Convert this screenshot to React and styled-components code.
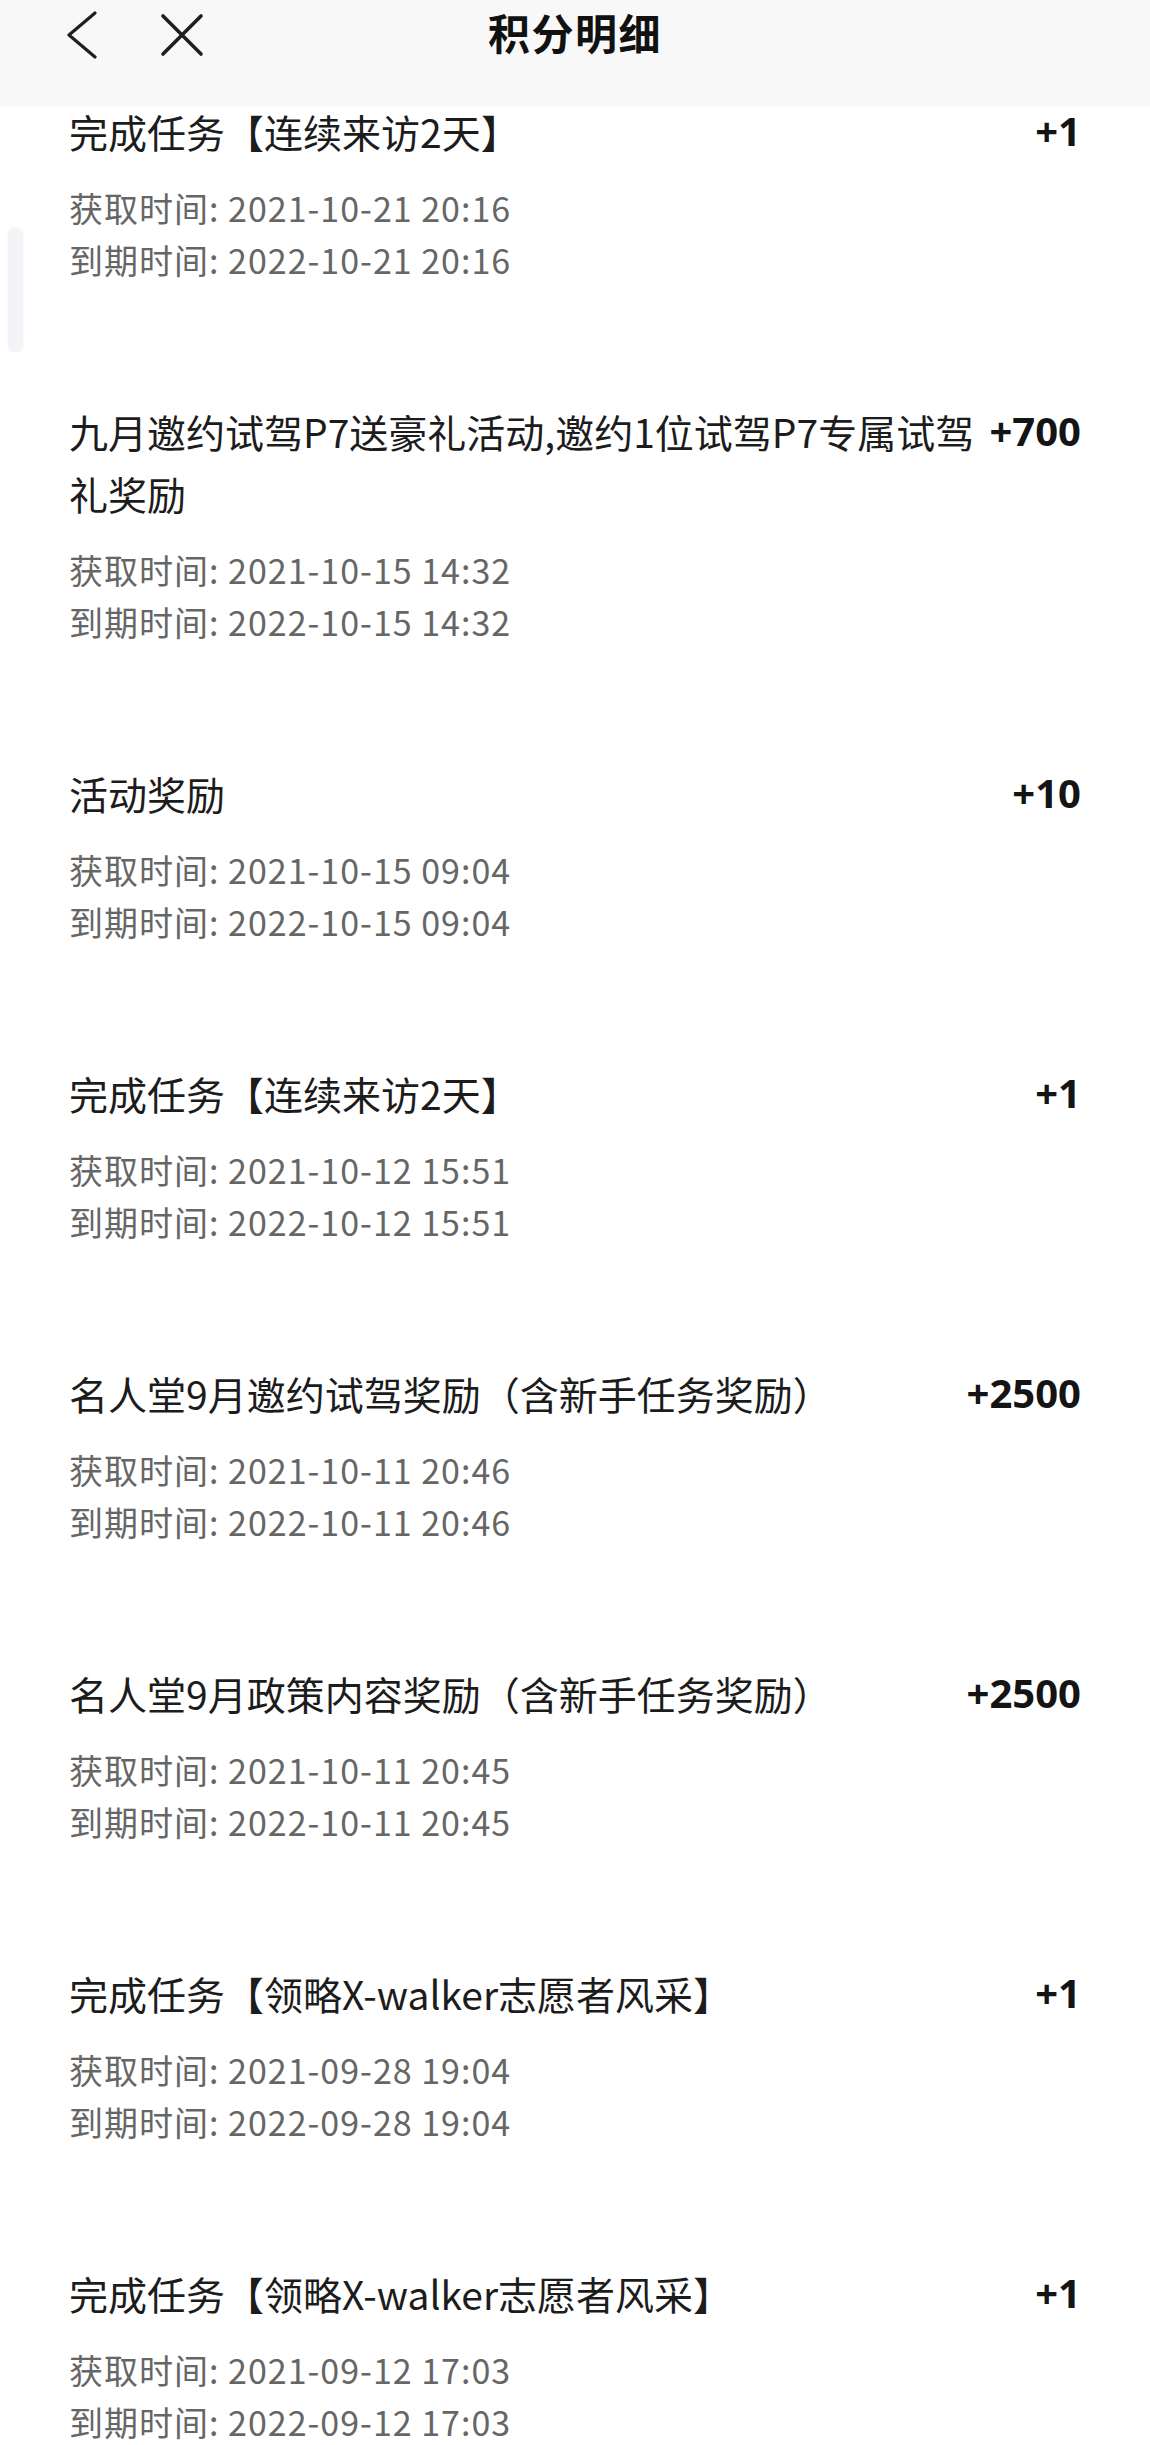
import React from 'react'
import styled, { createGlobalStyle } from 'styled-components'

const GlobalStyle = createGlobalStyle`
  html, body {
    margin: 0;
    padding: 0;
    background: #ffffff;
  }
  body {
    font-family: "Noto Sans CJK SC", "Noto Sans", "Liberation Sans", sans-serif;
    color: #1c1c1c;
  }
`

const Page = styled.div`
  position: relative;
  width: 1150px;
  height: 2445px;
  overflow: hidden;
  background: #fff;
`

const NavBar = styled.div`
  position: sticky;
  top: 0;
  z-index: 2;
  height: 107px;
  background: #f8f8f8;
  display: grid;
  grid-template-columns: 1fr auto 1fr;
  align-items: start;
`

const NavLeft = styled.div`
  display: flex;
  align-items: center;
  gap: 62px;
  padding: 11px 0 0 66px;
`

const IconButton = styled.button`
  border: 0;
  background: none;
  padding: 0;
  display: flex;
  color: #1f1f1f;
`

const Title = styled.h1`
  margin: 0;
  padding-top: 2px;
  font-size: 42px;
  line-height: 60px;
  font-weight: 700;
  color: #111;
  letter-spacing: 1.5px;
`

const ScrollHint = styled.div`
  position: absolute;
  left: 8px;
  top: 228px;
  width: 15px;
  height: 124px;
  border-radius: 8px;
  background: #f4f4f8;
  box-shadow: 0 0 3px rgba(0, 0, 0, 0.06);
  z-index: 1;
`

const List = styled.div`
  margin-top: -7px;
`

const Item = styled.div`
  padding: 0 69px 114px 69px;
`

const Head = styled.div`
  display: flex;
  align-items: flex-start;
  gap: 8px;
`

const ItemTitle = styled.div`
  flex: 1;
  font-size: 39px;
  line-height: 62px;
  color: #1c1c1c;
`

const Amount = styled.div`
  font-family: "Noto Sans", "Liberation Sans", sans-serif;
  font-size: 40px;
  line-height: 62px;
  font-weight: 700;
  color: #141414;
  white-space: nowrap;
`

const Dates = styled.div`
  margin-top: 20px;
`

const DateLine = styled.div`
  font-size: 34px;
  line-height: 52px;
  letter-spacing: 1px;
  color: #666;
`

const records = [
  { title: '完成任务【连续来访2天】', amount: '+1', get: '2021-10-21 20:16', end: '2022-10-21 20:16' },
  { title: '九月邀约试驾P7送豪礼活动,邀约1位试驾P7专属试驾礼奖励', amount: '+700', get: '2021-10-15 14:32', end: '2022-10-15 14:32' },
  { title: '活动奖励', amount: '+10', get: '2021-10-15 09:04', end: '2022-10-15 09:04' },
  { title: '完成任务【连续来访2天】', amount: '+1', get: '2021-10-12 15:51', end: '2022-10-12 15:51' },
  { title: '名人堂9月邀约试驾奖励（含新手任务奖励）', amount: '+2500', get: '2021-10-11 20:46', end: '2022-10-11 20:46' },
  { title: '名人堂9月政策内容奖励（含新手任务奖励）', amount: '+2500', get: '2021-10-11 20:45', end: '2022-10-11 20:45' },
  { title: '完成任务【领略X-walker志愿者风采】', amount: '+1', get: '2021-09-28 19:04', end: '2022-09-28 19:04' },
  { title: '完成任务【领略X-walker志愿者风采】', amount: '+1', get: '2021-09-12 17:03', end: '2022-09-12 17:03' },
]

export default function App () {
  return (
    <Page>
      <GlobalStyle />
      <NavBar>
        <NavLeft>
          <IconButton aria-label='back'>
            <svg width='32' height='48' viewBox='0 0 32 48' fill='none' stroke='currentColor' strokeWidth='3.2' strokeLinecap='round' strokeLinejoin='round'>
              <path d='M29 2 L3 24 L29 46' />
            </svg>
          </IconButton>
          <IconButton aria-label='close'>
            <svg width='44' height='44' viewBox='0 0 44 44' fill='none' stroke='currentColor' strokeWidth='3.6' strokeLinecap='round'>
              <path d='M3 3 L41 41 M41 3 L3 41' />
            </svg>
          </IconButton>
        </NavLeft>
        <Title>积分明细</Title>
        <div />
      </NavBar>
      <ScrollHint />
      <List>
        {records.map((r, i) => (
          <Item key={i}>
            <Head>
              <ItemTitle>{r.title}</ItemTitle>
              <Amount>{r.amount}</Amount>
            </Head>
            <Dates>
              <DateLine>获取时间: {r.get}</DateLine>
              <DateLine>到期时间: {r.end}</DateLine>
            </Dates>
          </Item>
        ))}
      </List>
    </Page>
  )
}
